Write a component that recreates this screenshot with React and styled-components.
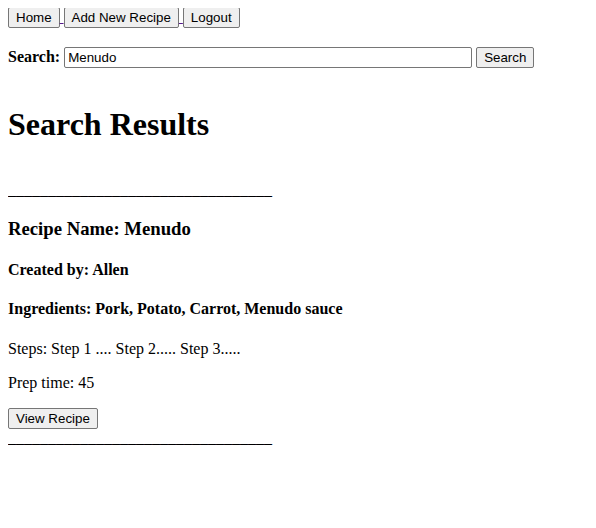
import React from 'react';
import styled, { createGlobalStyle } from 'styled-components';

const GlobalStyle = createGlobalStyle`
    body {
        margin: 8px;
        font-family: "Liberation Serif", "Times New Roman", serif;
        font-size: 16px;
        color: #000;
        background: #fff;
    }
`

const Nav = styled.div`
    margin-top: -1px;
`

const NavLink = styled.a`
    color: #551a8b;
`

const Button = styled.button`
    font-family: "Liberation Sans", Arial, sans-serif;
    font-size: 13.333px;
    padding: 2px 7px;
    color: #000;
    background-color: #efefef;
    border: 1px solid #767676;
    border-radius: 2px;
`

const SearchForm = styled.form`
    margin: 19px 0 38px;
`

const SearchInput = styled.input`
    width: 400px;
    font-family: "Liberation Sans", Arial, sans-serif;
    font-size: 13.333px;
    padding: 2px 3px;
    border: 1px solid #767676;
    border-radius: 2px;
`

const Title = styled.h1`
    font-size: 32px;
    margin: 21.44px 0;
`

const Divider = styled.p`
    margin: 38px 0 16px;
`

const RecipeName = styled.h3`
    font-size: 18.72px;
    margin: 18.72px 0;
`

const Detail = styled.h4`
    font-size: 16px;
    margin: 21.28px 0;
`

const Text = styled.p`
    margin: 16px 0;
`

const line = '_________________________________';

export default function App() {
    return (
        <>
            <GlobalStyle />
            <Nav>
                <NavLink href="#"><Button>Home</Button> </NavLink>
                <NavLink href="#"><Button>Add New Recipe</Button> </NavLink>
                <NavLink href="#"><Button>Logout</Button></NavLink>
            </Nav>
            <SearchForm onSubmit={(e) => e.preventDefault()}>
                <label><b>Search:</b></label>{' '}
                <SearchInput type="text" defaultValue="Menudo" />{' '}
                <Button type="submit">Search</Button>
            </SearchForm>
            <Title>Search Results</Title>
            <Divider>{line}</Divider>
            <RecipeName>Recipe Name: Menudo</RecipeName>
            <Detail>Created by: Allen</Detail>
            <Detail>Ingredients: Pork, Potato, Carrot, Menudo sauce</Detail>
            <Text>Steps: Step 1 .... Step 2..... Step 3.....</Text>
            <Text>Prep time: 45</Text>
            <Button>View Recipe</Button>
            <div>{line}</div>
        </>
    );
}
